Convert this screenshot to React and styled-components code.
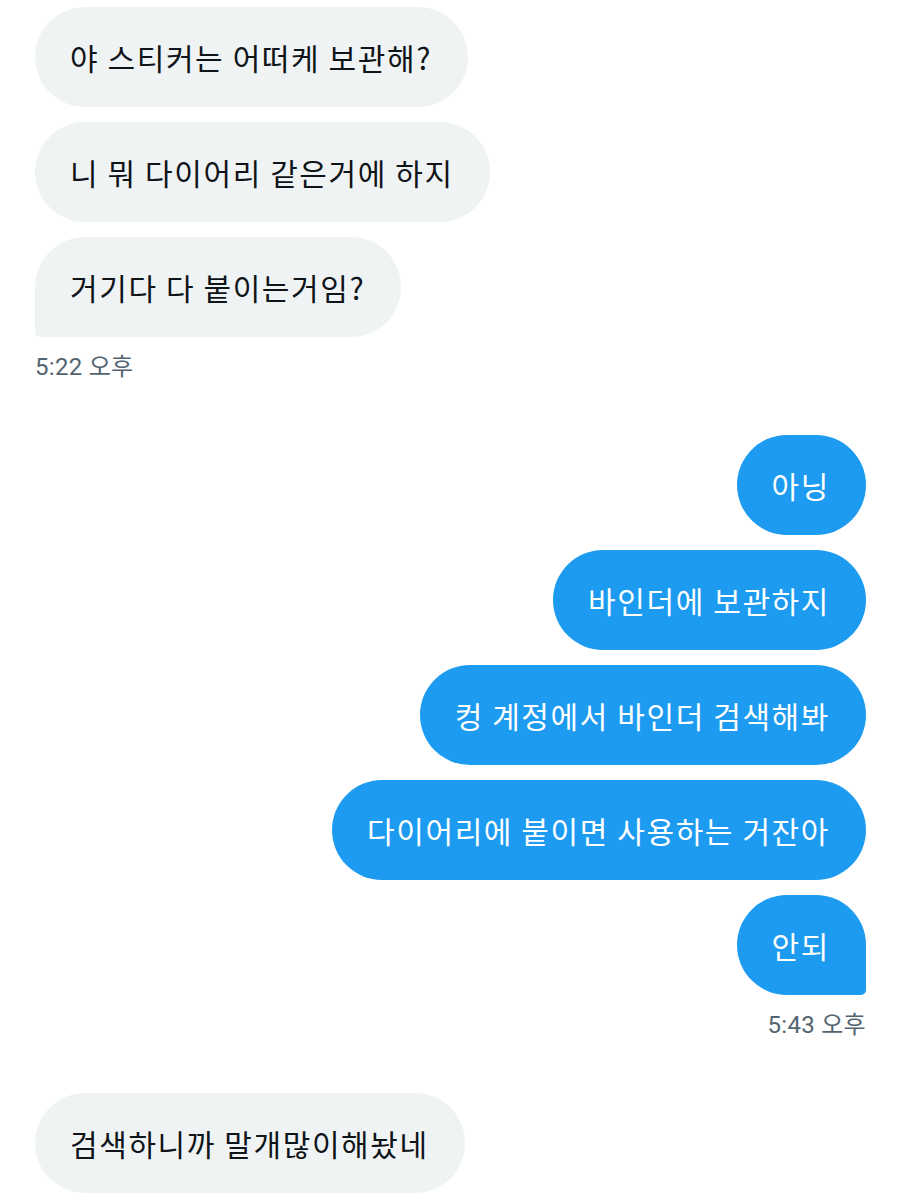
import React from "react";
import styled, { createGlobalStyle } from "styled-components";

const GlobalStyle = createGlobalStyle`
  html, body {
    margin: 0;
    padding: 0;
    background: #ffffff;
  }
  body {
    font-family: "Roboto", "Noto Sans CJK KR", sans-serif;
    -webkit-font-smoothing: antialiased;
  }
`;

const threads = [
  {
    mine: false,
    time: "5:22 오후",
    messages: ["야 스티커는 어떠케 보관해?", "니 뭐 다이어리 같은거에 하지", "거기다 다 붙이는거임?"],
  },
  {
    mine: true,
    time: "5:43 오후",
    messages: ["아닝", "바인더에 보관하지", "컹 계정에서 바인더 검색해봐", "다이어리에 붙이면 사용하는 거잔아", "안되"],
  },
  {
    mine: false,
    time: null,
    messages: ["검색하니까 말개많이해놨네"],
  },
];

const App = () => {
  return (
    <>
      <GlobalStyle />
      <Page>
        {threads.map((t, i) => (
          <Thread key={i} mine={t.mine}>
            <Stack mine={t.mine}>
              {t.messages.map((m, j) => (
                <Bubble key={j} mine={t.mine} last={t.time && j === t.messages.length - 1}>
                  {m}
                </Bubble>
              ))}
            </Stack>
            {t.time && <Time>{t.time}</Time>}
          </Thread>
        ))}
      </Page>
    </>
  );
};
export default App;

const Page = styled.div`
  width: 900px;
  min-height: 1200px;
  box-sizing: border-box;
  padding: 7px 34px 0 35px;
  display: flex;
  flex-direction: column;
  gap: 54px;
`;

const Thread = styled.div`
  display: flex;
  flex-direction: column;
  align-items: ${({ mine }) => (mine ? "flex-end" : "flex-start")};
`;

const Stack = styled.div`
  display: flex;
  flex-direction: column;
  align-items: ${({ mine }) => (mine ? "flex-end" : "flex-start")};
  gap: 15px;
`;

const Bubble = styled.div`
  height: 100px;
  box-sizing: border-box;
  padding: 0 36px 0 35px;
  display: flex;
  align-items: center;
  font-family: "Noto Sans CJK KR", "Roboto", sans-serif;
  font-size: 30px;
  letter-spacing: 1.6px;
  white-space: nowrap;
  background: ${({ mine }) => (mine ? "#1d9bf0" : "#eff3f4")};
  color: ${({ mine }) => (mine ? "#ffffff" : "#0f1419")};
  border-radius: 50px;
  ${({ last, mine }) =>
    last && (mine ? "border-bottom-right-radius: 5px;" : "border-bottom-left-radius: 5px;")}
`;

const Time = styled.div`
  margin-top: 16px;
  line-height: 28px;
  font-size: 24px;
  letter-spacing: 0.3px;
  color: #536471;
  white-space: nowrap;
`;
